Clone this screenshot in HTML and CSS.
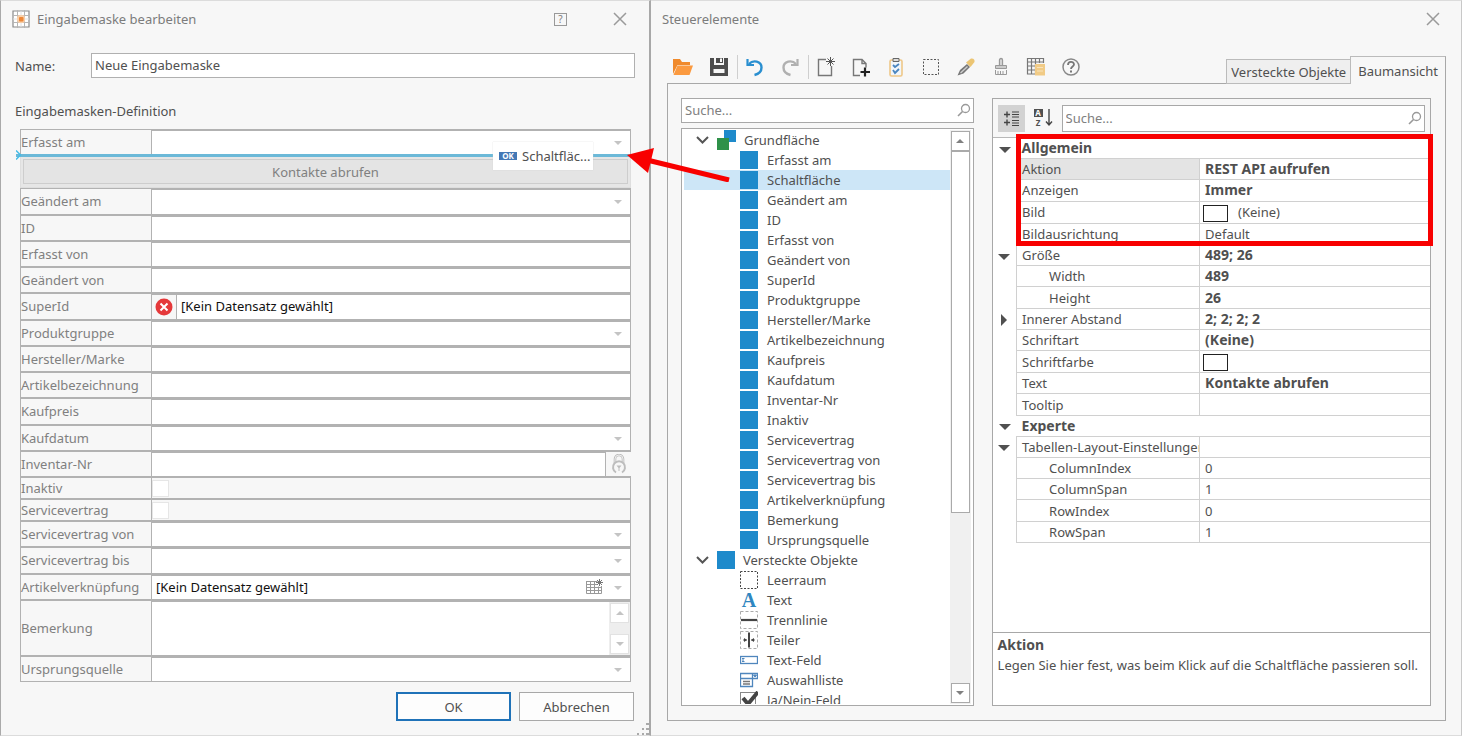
FILE: index.html
```html
<!DOCTYPE html>
<html lang="de">
<head>
    <meta charset="UTF-8">
    <meta name="viewport" content="width=device-width, initial-scale=1.0">
    <title>Eingabemaske bearbeiten</title>
    <link rel="stylesheet" href="styles.css">
</head>
<body>
    <!-- Form editor -->
    <section class="window editor">
        <header class="titlebar">
            <svg class="app-icon" width="18" height="18" viewBox="0 0 18 18">
                <path d="M1 1h16v16H1z" fill="#fff" stroke="#8a8a8a" stroke-width="1.2"/>
                <path d="M5.5 0v18M12.5 0v18M0 5.5h18M0 12.5h18" stroke="#b5b5b5"/>
                <path d="M9 1v16M1 9h16" stroke="#e0e0e0"/>
                <rect x="5" y="5" width="8" height="8" rx="3" fill="#f9cfa8"/>
                <rect x="7" y="7" width="4.500" height="4.500" rx="1" fill="#ee8838"/>
            </svg>
            <h1>Eingabemaske bearbeiten</h1>
            <button class="title-button help" aria-label="Hilfe">?</button>
            <button class="title-button" aria-label="Schließen">
                <svg width="14" height="14" viewBox="0 0 14 14"><path d="M1 1l12 12M13 1L1 13" stroke="#9a9a9a" stroke-width="1.5"/></svg>
            </button>
        </header>

        <div class="name-row">
            <label for="name">Name:</label>
            <input type="text" id="name" value="Neue Eingabemaske">
        </div>

        <h2>Eingabemasken-Definition</h2>

        <div class="mask">
            <div class="row">
                <label for="erfasst-am">Erfasst am</label>
                <div class="field drop"><select id="erfasst-am"><option></option></select></div>
            </div>
            <div class="row row-button">
                <button class="mask-button">Kontakte abrufen</button>
            </div>
            <div class="row">
                <label for="geaendert-am">Geändert am</label>
                <div class="field drop"><select id="geaendert-am"><option></option></select></div>
            </div>
            <div class="row">
                <label for="id">ID</label>
                <div class="field"><input type="text" id="id"></div>
            </div>
            <div class="row">
                <label for="erfasst-von">Erfasst von</label>
                <div class="field"><input type="text" id="erfasst-von"></div>
            </div>
            <div class="row">
                <label for="geaendert-von">Geändert von</label>
                <div class="field"><input type="text" id="geaendert-von"></div>
            </div>
            <div class="row">
                <label for="superid">SuperId</label>
                <div class="field">
                    <span class="error">
                        <svg width="18" height="18" viewBox="0 0 18 18">
                            <circle cx="9" cy="9" r="8.5" fill="#e5393b"/>
                            <path d="M5.5 5.5l7 7M12.5 5.5l-7 7" stroke="#fff" stroke-width="2"/>
                        </svg>
                    </span>
                    <input type="text" id="superid" value="[Kein Datensatz gewählt]">
                </div>
            </div>
            <div class="row">
                <label for="produktgruppe">Produktgruppe</label>
                <div class="field drop"><select id="produktgruppe"><option></option></select></div>
            </div>
            <div class="row">
                <label for="hersteller">Hersteller/Marke</label>
                <div class="field"><input type="text" id="hersteller"></div>
            </div>
            <div class="row">
                <label for="artikel">Artikelbezeichnung</label>
                <div class="field"><input type="text" id="artikel"></div>
            </div>
            <div class="row">
                <label for="kaufpreis">Kaufpreis</label>
                <div class="field"><input type="text" id="kaufpreis"></div>
            </div>
            <div class="row">
                <label for="kaufdatum">Kaufdatum</label>
                <div class="field drop"><select id="kaufdatum"><option></option></select></div>
            </div>
            <div class="row row-lock">
                <label for="inventar">Inventar-Nr</label>
                <div class="field"><input type="text" id="inventar"></div>
                <span class="lock">
                    <svg width="16" height="20" viewBox="0 0 16 20" fill="none" stroke="#bdbdbd">
                        <path d="M4 9V5a4 4 0 0 1 8 0v4" stroke-width="2.6"/>
                        <path d="M4 9V5a4 4 0 0 1 8 0v4" stroke="#f7f7f7" stroke-width=".8"/>
                        <path d="M5 18.500A6 6 0 1 1 11 18.500" stroke-width="2"/>
                        <path d="M5.500 11.500h5l-2 2.500v3h-1v-3z" fill="#bdbdbd" stroke="none"/>
                    </svg>
                </span>
            </div>
            <div class="row row-check">
                <label for="inaktiv">Inaktiv</label>
                <div class="field"><input type="checkbox" id="inaktiv"></div>
            </div>
            <div class="row row-check">
                <label for="servicevertrag">Servicevertrag</label>
                <div class="field"><input type="checkbox" id="servicevertrag"></div>
            </div>
            <div class="row">
                <label for="sv-von">Servicevertrag von</label>
                <div class="field drop"><select id="sv-von"><option></option></select></div>
            </div>
            <div class="row">
                <label for="sv-bis">Servicevertrag bis</label>
                <div class="field drop"><select id="sv-bis"><option></option></select></div>
            </div>
            <div class="row">
                <label for="verknuepfung">Artikelverknüpfung</label>
                <div class="field drop">
                    <select id="verknuepfung"><option>[Kein Datensatz gewählt]</option></select>
                    <svg class="grid-icon" width="17" height="16" viewBox="0 0 17 16" fill="none" stroke="#999">
                        <path d="M.5 2.500h11M.5 2v12.500h15V7M.5 5.500h11M.5 8.500h15M.5 11.500h15M4.500 2.500v12M8.500 2.500v12M12.500 7.500v7"/>
                        <path d="M13.500 0v7M10 3.500h7M11 1l5 5M16 1l-5 5" stroke="#777"/>
                    </svg>
                </div>
            </div>
            <div class="row row-memo">
                <label for="bemerkung">Bemerkung</label>
                <div class="field">
                    <textarea id="bemerkung"></textarea>
                    <div class="memo-scroll">
                        <button class="scroll-button" aria-label="Nach oben"><i class="tri up"></i></button>
                        <button class="scroll-button" aria-label="Nach unten"><i class="tri down"></i></button>
                    </div>
                </div>
            </div>
            <div class="row">
                <label for="quelle">Ursprungsquelle</label>
                <div class="field drop"><select id="quelle"><option></option></select></div>
            </div>

            <!-- Drop position and dragged item -->
            <div class="drop-line">
                <svg width="6" height="10" viewBox="0 0 6 10" fill="none" stroke="#45bde8" stroke-width="1.5"><path d="M0 .5L4.500 5L0 9.500"/></svg>
            </div>
            <div class="drag-item"><span class="ok-badge">OK</span>Schaltfläc...</div>
            <svg class="arrow" width="104" height="36" viewBox="0 0 104 36">
                <path d="M20 14L102 34" stroke="#f80000" stroke-width="5"/>
                <path d="M0 9L27 2L21 27z" fill="#f80000"/>
            </svg>
        </div>

        <footer class="actions">
            <button class="action primary">OK</button>
            <button class="action">Abbrechen</button>
        </footer>
        <svg class="grip" width="12" height="12" viewBox="0 0 12 12" fill="#aaa"><path d="M9 0h3v2H9zM5 5h2v2H5zM9 5h3v2H9zM0 10h2v2H0zM5 10h2v2H5zM9 10h3v2H9z"/></svg>
    </section>

    <!-- Controls and properties -->
    <section class="window controls">
        <header class="titlebar">
            <h1>Steuerelemente</h1>
            <button class="title-button" aria-label="Schließen">
                <svg width="14" height="14" viewBox="0 0 14 14"><path d="M1 1l12 12M13 1L1 13" stroke="#9a9a9a" stroke-width="1.5"/></svg>
            </button>
        </header>

        <div class="topbar">
            <div class="toolbar">
                <button class="tool" aria-label="Öffnen"><svg width="22" height="20" viewBox="0 0 22 20"><path d="M1 17V2h7l2 3h8v3H5.500z" fill="#f08a2c"/><path d="M5.500 8.500H21L17.500 18H1.500z" fill="#fb9a40"/></svg></button>
                <button class="tool" aria-label="Speichern"><svg width="20" height="20" viewBox="0 0 20 20"><path d="M1 1h4v7h10V1h4v18H1z" fill="#4d4d4d"/><path d="M7 1h7v5H7z" fill="#4d4d4d"/><path d="M4 8h12v3H4z" fill="#4d4d4d"/><path d="M11 1.500h2v3.500h-2z" fill="#f7f7f7"/><path d="M4.500 12h11v4h-11z" fill="#f7f7f7"/></svg></button>
                <span class="separator"></span>
                <button class="tool" aria-label="Rückgängig"><svg width="20" height="20" viewBox="0 0 20 20" fill="none"><path d="M4 7C8 2.500 16.500 4 16.500 10.500c0 4-3 6.500-7 7.500" stroke="#2a8fd0" stroke-width="2.400"/><path d="M2.500 2v6H9" stroke="#2a8fd0" stroke-width="2.200"/></svg></button>
                <button class="tool" aria-label="Wiederholen"><svg width="20" height="20" viewBox="0 0 20 20" fill="none"><path d="M16 7C12 2.500 3.500 4 3.500 10.500c0 4 3 6.500 7 7.500" stroke="#b0b0b0" stroke-width="2.400"/><path d="M17.500 2v6H11" stroke="#b0b0b0" stroke-width="2.200"/></svg></button>
                <span class="separator"></span>
                <button class="tool" aria-label="Neu"><svg width="20" height="20" viewBox="0 0 20 20" fill="none" stroke="#777"><path d="M10 2.500H2.500v16h13V9" stroke-width="1.400"/><path d="M14.500 0v9M10 4.500h9M11.500 1.500l6 6M17.500 1.500l-6 6" stroke="#555"/></svg></button>
                <button class="tool" aria-label="Hinzufügen"><svg width="20" height="20" viewBox="0 0 20 20" fill="none"><path d="M9 18.500H2.500v-16H11l4 4v4M11 2.500v4h4" stroke="#777" stroke-width="1.400"/><path d="M14 10.500v9M9.500 15h9.500" stroke="#222" stroke-width="2.200"/></svg></button>
                <button class="tool" aria-label="Prüfen"><svg width="20" height="20" viewBox="0 0 20 20" fill="none"><rect x="4" y="3" width="12" height="16" rx="1.500" fill="#f2f6fa" stroke="#eec788" stroke-width="1.600"/><path d="M7 1.500h6v3H7z" fill="#ddd" stroke="#666"/><path d="M7 8l2 2 4-3M7 13l2 3 4-4" stroke="#4a86c0" stroke-width="1.800"/></svg></button>
                <button class="tool" aria-label="Auswählen"><svg width="20" height="20" viewBox="0 0 20 20" fill="none"><rect x="2.500" y="2.500" width="15" height="15" stroke="#555" stroke-dasharray="2 1.500"/></svg></button>
                <button class="tool" aria-label="Pipette"><svg width="20" height="20" viewBox="0 0 20 20"><path d="M1.500 18.500L4 13l7-6 3 3-6.500 6.500z" fill="#777"/><path d="M4 15.500L11 9l1 1-7 6.500z" fill="#ccc"/><path d="M10 5.500l5-4q4-.5 3.500 3.500l-4 5z" fill="#ecc573"/></svg></button>
                <button class="tool" aria-label="Pinsel"><svg width="20" height="20" viewBox="0 0 20 20" fill="none" stroke="#999"><path d="M8.500 8V3a1.500 1.500 0 0 1 3 0v5" fill="#ddd" stroke-width="1.300"/><path d="M4.500 8.500h11v3h-11z" fill="#ccc"/><path d="M4.500 13v4.500h11V13M7 14v3M9.500 14v3M12 14v3"/></svg></button>
                <button class="tool" aria-label="Tabelle"><svg width="20" height="20" viewBox="0 0 20 20" fill="none"><path d="M1.500 1.500h16M1.500 5h16M1.500 9h10M1.500 13h9M1.500 17h9M1.500 1v16.500M5.500 1v16.500M9.500 1v16.500M13.500 1v5M17.500 1v5" stroke="#777" stroke-width="1.200"/><path d="M9 7h10v11.500H9z" fill="#f1cb86"/><path d="M11 10.500h6M11 14h6" stroke="#f8e3bb"/></svg></button>
                <button class="tool" aria-label="Hilfe"><svg width="20" height="20" viewBox="0 0 20 20" fill="none" stroke="#888"><circle cx="10" cy="10" r="8" stroke-width="1.500"/><path d="M7 8c0-4 6-4 6-.5 0 2-3 2-3 4.500" stroke="#777" stroke-width="1.800"/><path d="M10 13.500v2" stroke="#777" stroke-width="2"/></svg></button>
            </div>
            <div class="tabs">
                <button class="tab">Versteckte Objekte</button>
                <button class="tab active">Baumansicht</button>
            </div>
        </div>

        <div class="panel">
            <div class="left-column">
                <div class="search">
                    <input type="text" placeholder="Suche..." aria-label="Element suchen">
                    <svg width="14" height="14" viewBox="0 0 14 14" fill="none" stroke="#999"><circle cx="8.500" cy="5.500" r="4" stroke-width="1.300"/><path d="M5.500 8.500L1 13" stroke-width="1.600"/></svg>
                </div>
                <div class="tree">
                    <ul class="tree-list">
                        <li class="node"><svg class="chevron" width="13" height="8" viewBox="0 0 13 8"><path d="M1 1l5.500 5.500L12 1" fill="none" stroke="#555" stroke-width="2"/></svg><span class="icon pair"></span>Grundfläche</li>
                        <li class="leaf"><span class="icon"></span>Erfasst am</li>
                        <li class="leaf selected"><span class="icon"></span>Schaltfläche</li>
                        <li class="leaf"><span class="icon"></span>Geändert am</li>
                        <li class="leaf"><span class="icon"></span>ID</li>
                        <li class="leaf"><span class="icon"></span>Erfasst von</li>
                        <li class="leaf"><span class="icon"></span>Geändert von</li>
                        <li class="leaf"><span class="icon"></span>SuperId</li>
                        <li class="leaf"><span class="icon"></span>Produktgruppe</li>
                        <li class="leaf"><span class="icon"></span>Hersteller/Marke</li>
                        <li class="leaf"><span class="icon"></span>Artikelbezeichnung</li>
                        <li class="leaf"><span class="icon"></span>Kaufpreis</li>
                        <li class="leaf"><span class="icon"></span>Kaufdatum</li>
                        <li class="leaf"><span class="icon"></span>Inventar-Nr</li>
                        <li class="leaf"><span class="icon"></span>Inaktiv</li>
                        <li class="leaf"><span class="icon"></span>Servicevertrag</li>
                        <li class="leaf"><span class="icon"></span>Servicevertrag von</li>
                        <li class="leaf"><span class="icon"></span>Servicevertrag bis</li>
                        <li class="leaf"><span class="icon"></span>Artikelverknüpfung</li>
                        <li class="leaf"><span class="icon"></span>Bemerkung</li>
                        <li class="leaf"><span class="icon"></span>Ursprungsquelle</li>
                        <li class="node"><svg class="chevron" width="13" height="8" viewBox="0 0 13 8"><path d="M1 1l5.500 5.500L12 1" fill="none" stroke="#555" stroke-width="2"/></svg><span class="icon"></span>Versteckte Objekte</li>
                        <li class="leaf"><svg width="18" height="18" viewBox="0 0 18 18"><rect x=".5" y=".5" width="17" height="17" fill="none" stroke="#444" stroke-dasharray="2 1.500"/></svg>Leerraum</li>
                        <li class="leaf"><span class="letter">A</span>Text</li>
                        <li class="leaf"><svg width="18" height="18" viewBox="0 0 18 18" fill="none"><rect x=".5" y=".5" width="17" height="17" stroke="#aaa" stroke-dasharray="3 2"/><path d="M1 9h16" stroke="#444" stroke-width="2.200"/></svg>Trennlinie</li>
                        <li class="leaf"><svg width="18" height="18" viewBox="0 0 18 18" fill="none"><rect x=".5" y=".5" width="17" height="17" stroke="#aaa" stroke-dasharray="3 2"/><path d="M9 1.500v15" stroke="#444" stroke-width="2"/><path d="M3 9h4M11 9h4" stroke="#666"/><path d="M4 7l3 2-3 2zM14 7l-3 2 3 2z" fill="#444"/></svg>Teiler</li>
                        <li class="leaf"><svg width="18" height="18" viewBox="0 0 18 18" fill="none"><rect x=".5" y="5.500" width="17" height="7" fill="#fff" stroke="#4f86bd" stroke-width="1.300"/><path d="M2 7.500h2.500M2 10.500h2.500M3 7.500v3" stroke="#4f86bd"/></svg>Text-Feld</li>
                        <li class="leaf"><svg width="18" height="18" viewBox="0 0 18 18" fill="none" stroke="#4f86bd"><path d="M.5 2.500h17v5H.5zM12.500 2.500v5M.5 7.500v8h12v-8" stroke-width="1.300"/><path d="M13.500 4l1.500 2 1.500-2z" fill="#4f86bd"/><path d="M3 10.500h7M3 13h7" stroke="#777" stroke-width="1.300"/></svg>Auswahlliste</li>
                        <li class="leaf"><svg width="18" height="18" viewBox="0 0 18 18" fill="none"><rect x=".5" y="1.500" width="15" height="15" stroke="#888"/><path d="M3 7l5 6L18 1" stroke="#444" stroke-width="4"/></svg>Ja/Nein-Feld</li>
                    </ul>
                    <div class="scrollbar">
                        <button class="scroll-button" aria-label="Nach oben"><i class="tri up"></i></button>
                        <div class="track"><div class="thumb"></div></div>
                        <button class="scroll-button" aria-label="Nach unten"><i class="tri down"></i></button>
                    </div>
                </div>
            </div>

            <div class="properties">
                <div class="prop-bar">
                    <button class="sort active" aria-label="Kategorien"><svg width="17" height="17" viewBox="0 0 17 17" stroke="#444" fill="none"><path d="M1 4.500h6M4 1.500v6M1 12.500h6M4 9.500v6" stroke-width="1.400"/><path d="M9 2h7M9 4.500h7M9 7h7M9 10.500h7M9 13h7M9 15.500h7" stroke-width="1.200"/></svg></button>
                    <button class="sort" aria-label="Alphabetisch"><span class="az"><b>A</b><b>Z</b></span><svg width="8" height="18" viewBox="0 0 8 18"><path d="M4 0v16M1 12.500L4 16l3-3.500" fill="none" stroke="#444" stroke-width="1.400"/></svg></button>
                    <div class="search">
                        <input type="text" placeholder="Suche..." aria-label="Eigenschaft suchen">
                        <svg width="14" height="14" viewBox="0 0 14 14" fill="none" stroke="#999"><circle cx="8.500" cy="5.500" r="4" stroke-width="1.300"/><path d="M5.500 8.500L1 13" stroke-width="1.600"/></svg>
                    </div>
                </div>
                <div class="prop-grid">
                    <table class="prop-table">
                        <colgroup><col class="col-toggle"><col class="col-name"><col></colgroup>
                        <tbody>
                            <tr class="category"><td><i class="tri down"></i></td><th colspan="2">Allgemein</th></tr>
                            <tr class="current"><td></td><th>Aktion</th><td><b>REST API aufrufen</b></td></tr>
                            <tr><td></td><th>Anzeigen</th><td><b>Immer</b></td></tr>
                            <tr><td></td><th>Bild</th><td class="color-cell"><span class="swatch"></span>(Keine)</td></tr>
                            <tr><td></td><th>Bildausrichtung</th><td>Default</td></tr>
                            <tr><td><i class="tri down"></i></td><th>Größe</th><td><b>489; 26</b></td></tr>
                            <tr class="sub"><td></td><th>Width</th><td><b>489</b></td></tr>
                            <tr class="sub"><td></td><th>Height</th><td><b>26</b></td></tr>
                            <tr><td><i class="tri right"></i></td><th>Innerer Abstand</th><td><b>2; 2; 2; 2</b></td></tr>
                            <tr><td></td><th>Schriftart</th><td><b>(Keine)</b></td></tr>
                            <tr><td></td><th>Schriftfarbe</th><td class="color-cell"><span class="swatch"></span></td></tr>
                            <tr><td></td><th>Text</th><td><b>Kontakte abrufen</b></td></tr>
                            <tr><td></td><th>Tooltip</th><td></td></tr>
                            <tr class="category"><td><i class="tri down"></i></td><th colspan="2">Experte</th></tr>
                            <tr><td><i class="tri down"></i></td><th>Tabellen-Layout-Einstellungen</th><td></td></tr>
                            <tr class="sub"><td></td><th>ColumnIndex</th><td>0</td></tr>
                            <tr class="sub"><td></td><th>ColumnSpan</th><td>1</td></tr>
                            <tr class="sub"><td></td><th>RowIndex</th><td>0</td></tr>
                            <tr class="sub"><td></td><th>RowSpan</th><td>1</td></tr>
                        </tbody>
                    </table>
                    <div class="highlight"></div>
                </div>
                <div class="description">
                    <b>Aktion</b>
                    <p>Legen Sie hier fest, was beim Klick auf die Schaltfläche passieren soll.</p>
                </div>
            </div>
        </div>
    </section>
</body>
</html>
```
FILE: styles.css
```css
* {
    box-sizing: border-box;
}

body {
    margin: 0;
    display: grid;
    grid-template-columns: 651fr 811fr;
    height: 100vh;
    min-height: 640px;
    background-color: #f7f7f7;
    color: #505050;
    font-family: "Noto Sans", Tahoma, sans-serif;
    font-size: 13px;
    line-height: 20px;
}

button, input, select, textarea {
    font: inherit;
    color: inherit;
    border: none;
    border-radius: 0;
    background: none;
    margin: 0;
    padding: 0;
    min-width: 0;
    outline: none;
    appearance: none;
}

h1, h2, p, ul {
    margin: 0;
    padding: 0;
    font-size: 13px;
    font-weight: 400;
    list-style: none;
}

svg {
    display: block;
    flex: none;
}

/* Windows */

.window {
    position: relative;
    display: flex;
    flex-direction: column;
    min-width: 0;
    min-height: 0;
    border-top: 1px solid #dcdcdc;
    border-bottom: 1px solid #dcdcdc;
}

.editor {
    border-left: 1px solid #aaa;
    border-right: 2px solid #a8a8a8;
    padding: 0 14px 14px;
}

.controls {
    border-right: 1px solid #c8c8c8;
    padding: 0 15px 14px 16px;
}

.titlebar {
    display: flex;
    align-items: center;
    height: 36px;
    color: #7c7c7c;
}

.titlebar h1 {
    flex: 1;
}

.editor .titlebar {
    padding: 0 8px 0 0;
    margin-left: -3px;
    gap: 7px;
}

.controls .titlebar {
    padding-right: 6px;
    margin-left: -5px;
}

.title-button {
    display: flex;
    align-items: center;
    justify-content: center;
}

.title-button.help {
    width: 13px;
    height: 13px;
    margin-right: 39px;
    border: 1px solid #999;
    font-size: 10px;
    line-height: 11px;
}

/* Form editor */

.name-row {
    display: flex;
    align-items: center;
    margin-top: 16px;
}

.name-row label {
    width: 76px;
}

.name-row input {
    flex: 1;
    height: 25px;
    padding: 0 3px 2px;
    border: 1px solid #b0b0b0;
    background-color: #fff;
}

h2 {
    margin: 23px 0 8px;
}

.mask {
    position: relative;
    flex: 1;
    display: flex;
    flex-direction: column;
    margin: 0 4px 0 5px;
    color: #808080;
}

.row {
    flex: 1 0 26px;
    display: flex;
    border: 1px solid #b2b2b2;
}

.row label {
    width: 131px;
    display: flex;
    align-items: center;
    border-right: 1px solid #b2b2b2;
}

.field {
    position: relative;
    flex: 1;
    display: flex;
    align-items: center;
    border-top: 1px solid #b2b2b2;
    background-color: #fff;
    color: #111;
}

.field input[type="text"], .field select, .field textarea {
    flex: 1;
    align-self: stretch;
    padding: 0 4px 1px;
}

.field textarea {
    resize: none;
}

.drop::after {
    content: "";
    position: absolute;
    right: 8px;
    top: 10px;
    border: 4px solid transparent;
    border-top-color: #c4c4c4;
    border-bottom: none;
}

.grid-icon {
    position: absolute;
    right: 27px;
    top: 3px;
}

.error {
    align-self: stretch;
    display: flex;
    align-items: center;
    width: 25px;
    padding-left: 3px;
    border-right: 1px solid #b2b2b2;
    background-color: #f7f7f7;
}

.row-button {
    flex: 0 0 33px;
    padding: 3px 2px;
    border-color: #dedede;
    background-color: #e6e6e6;
}

.mask-button {
    flex: 1;
    border: 1px solid #cdcdcd;
    background-color: #e4e4e4;
}

.row-lock {
    border-right: none;
}

.row-lock .field {
    border-right: 1px solid #b2b2b2;
}

.lock {
    width: 25px;
    display: flex;
    align-items: center;
    justify-content: center;
}

.row-check {
    flex: 0 0 21px;
}

.row-check .field {
    border-top: none;
    background: none;
}

.row-check input {
    width: 17px;
    height: 17px;
    border: 1px solid #e6e6e6;
    background-color: #fff;
}

.row-memo {
    flex: 0 0 56px;
}

.memo-scroll {
    align-self: stretch;
    display: flex;
    flex-direction: column;
    justify-content: space-between;
    width: 21px;
    padding: 1px;
    background-color: #eee;
}

.memo-scroll .scroll-button {
    border-color: #e2e2e2;
}

.memo-scroll .tri {
    color: #c4c4c4;
}

.drop-line {
    position: absolute;
    left: -4px;
    right: 2px;
    top: 25px;
    height: 3px;
    background-color: #6cb9d8;
}

.drop-line svg {
    position: absolute;
    left: 0;
    top: -4px;
}

.drag-item {
    position: absolute;
    right: 38px;
    top: 13px;
    width: 100px;
    height: 28px;
    display: flex;
    align-items: center;
    gap: 5px;
    padding-left: 6px;
    background-color: #fff;
    box-shadow: 0 0 1px #ccc;
    color: #505050;
    white-space: nowrap;
}

.ok-badge {
    width: 18px;
    height: 8px;
    background-color: #4478b5;
    color: #fff;
    font-size: 8px;
    font-weight: 700;
    line-height: 8px;
    text-align: center;
}

.arrow {
    position: absolute;
    right: -100px;
    top: 17px;
    z-index: 2;
}

.actions {
    display: flex;
    justify-content: flex-end;
    gap: 8px;
    margin-top: 10px;
    padding-right: 1px;
}

.action {
    width: 115px;
    height: 29px;
    border: 1px solid #a8a8a8;
    background-color: #fdfdfd;
}

.action.primary {
    border: 2px solid #1f72b8;
}

.grip {
    position: absolute;
    right: 0;
    bottom: 0;
}

/* Toolbar and tabs */

.topbar {
    display: flex;
    justify-content: space-between;
    align-items: flex-end;
    height: 46px;
}

.toolbar {
    display: flex;
    align-items: center;
    gap: 15px;
    height: 32px;
    padding-left: 5px;
}

.tool:nth-child(2) {
    margin-right: -7px;
}

.separator {
    width: 1px;
    height: 24px;
    margin-right: -8px;
    background-color: #cfcfcf;
}

.tool + .separator {
    margin-left: -7px;
}

.tool:nth-child(2) + .separator {
    margin-left: 0;
}

.tabs {
    display: flex;
    align-items: flex-end;
    position: relative;
    z-index: 1;
    margin-bottom: -1px;
}

.tab {
    height: 25px;
    padding: 0 4px;
    border: 1px solid #bbb;
    border-right: none;
    background-color: #efefef;
    white-space: nowrap;
}

.tab.active {
    height: 28px;
    padding: 0 7px;
    border-right: 1px solid #a8a8a8;
    border-bottom: none;
    background-color: #f7f7f7;
}

.panel {
    flex: 1;
    min-height: 0;
    display: grid;
    grid-template-columns: 293fr 440fr;
    gap: 18px;
    padding: 14px 14px 14px 13px;
    border: 1px solid #a8a8a8;
}

.left-column {
    display: flex;
    flex-direction: column;
    gap: 5px;
    min-height: 0;
}

.search {
    display: flex;
    align-items: center;
    height: 25px;
    padding: 0 2px 1px 3px;
    border: 1px solid #a8a8a8;
    background-color: #fff;
}

.search input {
    flex: 1;
}

.search input::placeholder {
    color: #808080;
    opacity: 1;
}

/* Tree */

.tree {
    flex: 1;
    min-height: 0;
    display: flex;
    padding: 1px 2px;
    border: 1px solid #a8a8a8;
    background-color: #fff;
}

.tree-list {
    flex: 1;
    overflow: hidden;
}

.tree-list li {
    display: flex;
    align-items: center;
    gap: 9px;
    height: 20px;
    white-space: nowrap;
}

.tree-list .node {
    gap: 8px;
    padding-left: 12px;
}

.tree-list .leaf {
    padding-left: 56px;
}

.tree-list .selected {
    background-color: #cde6f7;
}

.icon {
    position: relative;
    flex: none;
    width: 18px;
    height: 18px;
    background-color: #1e8acb;
}

.icon.pair {
    width: 19px;
    height: 20px;
    background: linear-gradient(#2f9149, #2f9149) 0 8px / 12px 12px no-repeat, linear-gradient(#1e8acb, #1e8acb) 7px 0 / 12px 12px no-repeat;
}

.letter {
    flex: none;
    width: 18px;
    color: #2f86c0;
    font: 700 20px/18px "Liberation Serif", serif;
    text-align: center;
}

.scrollbar {
    display: flex;
    flex-direction: column;
    width: 21px;
    padding: 1px;
    background-color: #f0f0f0;
}

.scroll-button {
    display: flex;
    align-items: center;
    justify-content: center;
    width: 19px;
    height: 20px;
    border: 1px solid #aaa;
    background-color: #fff;
}

.track {
    flex: 1;
}

.thumb {
    height: 68%;
    border: 1px solid #aaa;
    background-color: #fff;
}

.tri {
    display: inline-block;
    color: #808080;
    border: 4px solid transparent;
}

.tri.up {
    border-bottom-color: currentColor;
    border-top: none;
}

.tri.down {
    border-top-color: currentColor;
    border-bottom: none;
}

.tri.right {
    border-left-color: currentColor;
    border-right: none;
}

/* Properties */

.properties {
    display: flex;
    flex-direction: column;
    min-width: 0;
    min-height: 0;
    border: 1px solid #a8a8a8;
}

.prop-bar {
    display: flex;
    align-items: center;
    gap: 5px;
    height: 38px;
    padding: 0 5px;
}

.prop-bar .search {
    flex: 1;
    height: 27px;
}

.sort {
    display: flex;
    align-items: center;
    justify-content: center;
    gap: 2px;
    width: 27px;
    height: 27px;
}

.sort.active {
    background-color: #d2d2d2;
}

.az {
    display: flex;
    flex-direction: column;
    gap: 2px;
}

.az b {
    width: 9px;
    height: 8px;
    font-size: 8px;
    line-height: 8px;
}

.az b:first-child {
    background-color: #505050;
    color: #fff;
}

.prop-grid {
    position: relative;
    flex: 1;
    border-top: 1px solid #b8b8b8;
    background-color: #fff;
}

.prop-table {
    width: 100%;
    height: 405px;
    table-layout: fixed;
    border-collapse: collapse;
    line-height: 18px;
}

.col-toggle {
    width: 24px;
}

.col-name {
    width: 183px;
}

.prop-table th, .prop-table td {
    padding: 0 5px;
    border: 1px solid #d0d0d0;
    text-align: left;
    font-weight: 400;
    white-space: nowrap;
    overflow: hidden;
}

.prop-table td:last-child {
    border-right: none;
}

.prop-table td:first-child {
    padding: 0;
    border: none;
    text-align: center;
}

.prop-table .tri {
    border-width: 6px;
    vertical-align: middle;
    color: #505050;
}

.prop-table .tri.down {
    border-bottom: none;
}

.prop-table .tri.right {
    border-right: none;
}

.prop-table .category th {
    border-left: none;
    border-right: none;
    font-size: 14px;
    font-weight: 700;
}

.prop-table .category:first-child th {
    border-top: none;
}

.prop-table b, .description b {
    font-size: 14px;
}

.prop-table .current th {
    background-color: #e4e4e4;
}

.prop-table .sub th {
    padding-left: 32px;
}

.prop-table .color-cell {
    padding-left: 3px;
}

.swatch {
    display: inline-block;
    width: 25px;
    height: 17px;
    margin-right: 10px;
    border: 1px solid #222;
    background-color: #fff;
    vertical-align: middle;
}

.highlight {
    position: absolute;
    left: 23px;
    right: -3px;
    top: -4px;
    height: 112px;
    border: 5px solid #f80000;
}

.description {
    height: 73px;
    padding: 2px 5px;
    border-top: 1px solid #a8a8a8;
    background-color: #fff;
}
```
